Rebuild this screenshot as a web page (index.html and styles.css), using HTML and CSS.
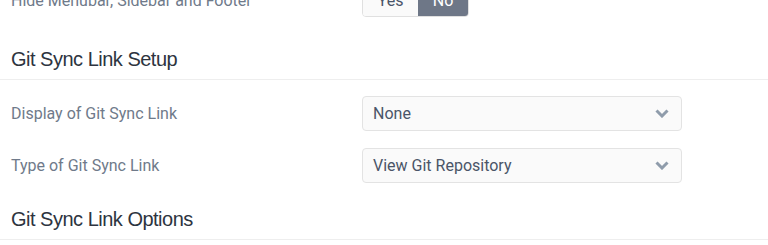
FILE: index.html
```html
<!DOCTYPE html>
<html>
<head>
<meta charset="utf-8">
<link rel="stylesheet" href="styles.css">
</head>
<body>
<div class="page">
  <div class="row row-first">
    <label class="label">Hide Menubar, Sidebar and Footer</label>
    <div class="control">
      <div class="toggle">
        <span class="toggle-opt">Yes</span>
        <span class="toggle-opt active">No</span>
      </div>
    </div>
  </div>

  <h2 class="section">Git Sync Link Setup</h2>

  <div class="row">
    <label class="label">Display of Git Sync Link</label>
    <div class="control">
      <div class="select">
        <span class="select-value">None</span>
        <svg class="chevron" width="14" height="9" viewBox="0 0 14 9"><path d="M1.5 1.5 L7 7 L12.5 1.5" fill="none" stroke="#8f9cab" stroke-width="3"/></svg>
      </div>
    </div>
  </div>

  <div class="row">
    <label class="label">Type of Git Sync Link</label>
    <div class="control">
      <div class="select">
        <span class="select-value">View Git Repository</span>
        <svg class="chevron" width="14" height="9" viewBox="0 0 14 9"><path d="M1.5 1.5 L7 7 L12.5 1.5" fill="none" stroke="#8f9cab" stroke-width="3"/></svg>
      </div>
    </div>
  </div>

  <h2 class="section">Git Sync Link Options</h2>
</div>
</body>
</html>
```
FILE: styles.css
```css
html, body {
  margin: 0;
  padding: 0;
  background: #ffffff;
  overflow: hidden;
}

.page {
  margin-top: -16px;
  font-family: Roboto, "Liberation Sans", sans-serif;
}

.row {
  display: flex;
  align-items: center;
  height: 35px;
  margin-bottom: 17px;
}

.row-first {
  height: 33px;
  margin-bottom: 23px;
}

.label {
  width: 351px;
  padding-left: 11px;
  font-size: 16px;
  color: #6f7a8a;
}

.control {
  width: 320px;
}

.toggle {
  display: inline-flex;
  height: 33px;
  box-sizing: border-box;
  border: 1px solid #e0e0e0;
  border-radius: 4px;
  overflow: hidden;
  font-size: 16px;
}

.toggle-opt {
  display: flex;
  align-items: center;
  justify-content: center;
  width: 55px;
  background: #fafafa;
  color: #4a5568;
}

.toggle-opt.active {
  width: 50px;
  background: #6e7787;
  color: #ffffff;
}

.select {
  display: flex;
  align-items: center;
  justify-content: space-between;
  height: 35px;
  box-sizing: border-box;
  border: 1px solid #e3e3e3;
  border-radius: 4px;
  background: #fafafa;
  padding: 0 12px 0 10px;
}

.select-value {
  font-size: 16px;
  color: #4a5568;
}

.chevron {
  display: block;
}

.section {
  margin: 0 0 16px 0;
  padding: 5px 0 6px 11px;
  font-family: "Liberation Sans", Arial, sans-serif;
  font-weight: normal;
  font-size: 20px;
  line-height: 28px;
  letter-spacing: -0.5px;
  color: #2d3440;
  border-bottom: 1px solid #eeeeee;
}
```
